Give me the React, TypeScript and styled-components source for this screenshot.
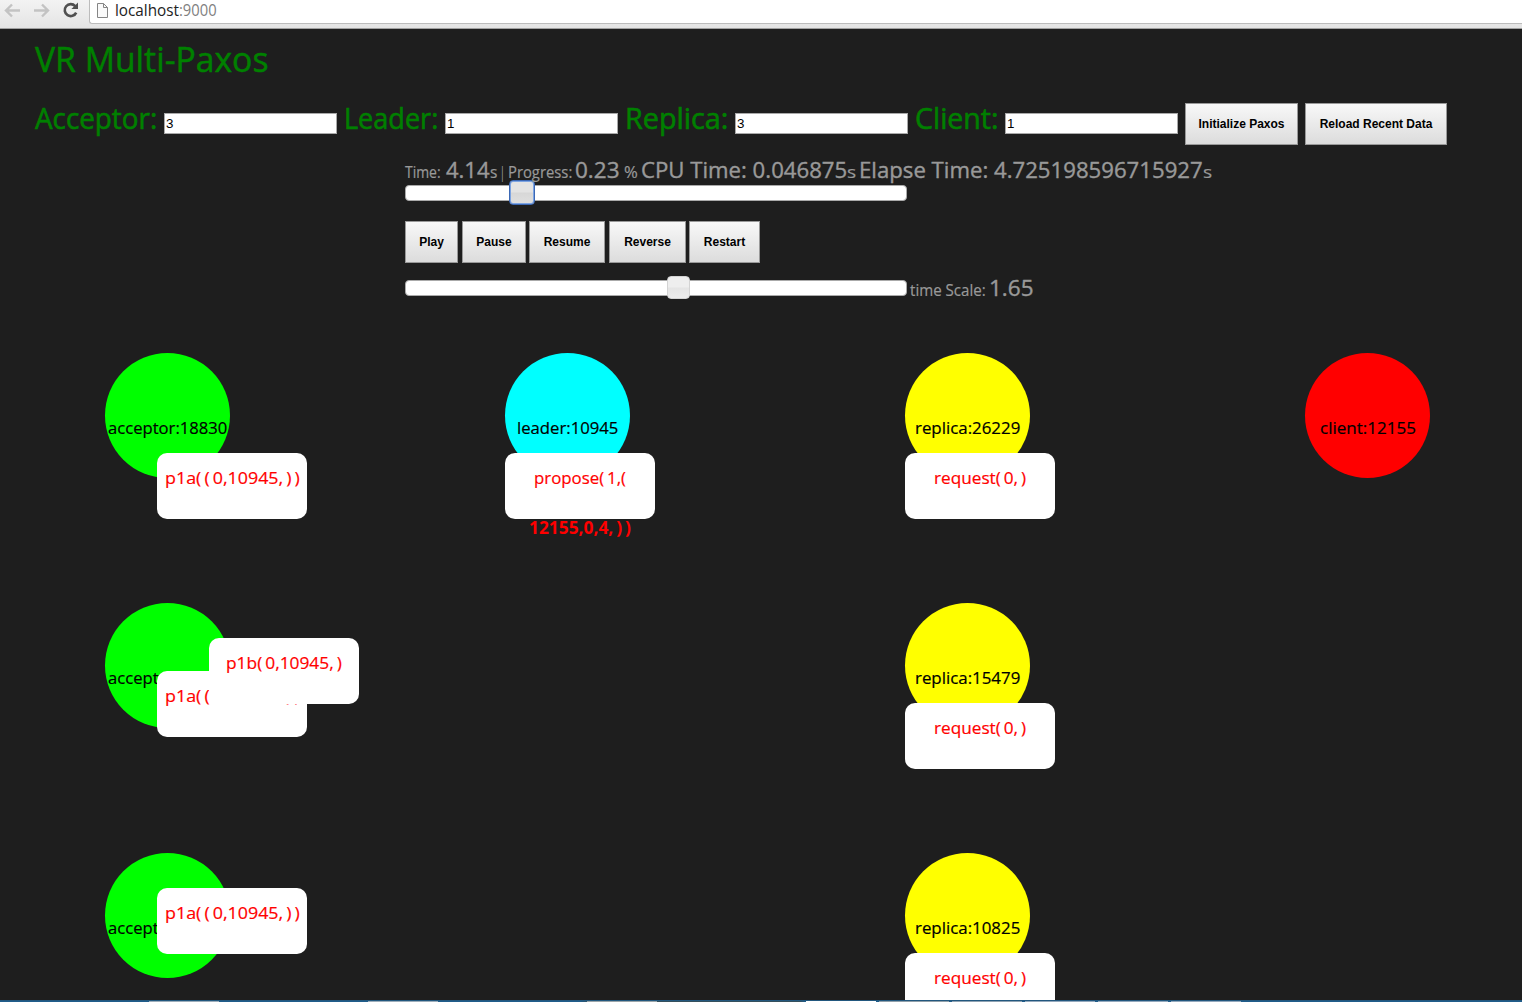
import React, { useLayoutEffect, useRef, useState } from "react";
import styled, { createGlobalStyle } from "styled-components";

const Global = createGlobalStyle`
  body { margin: 0; background: #1e1e1e; overflow: hidden; }
  * { box-sizing: border-box; }
`;

const Page = styled.div`
  display: flex;
  flex-direction: column;
  width: 1522px;
  height: 1002px;
  background: #1e1e1e;
  color: #999;
  font-family: "Open Sans", "Noto Sans", sans-serif;
`;

/* Condensed text: the glyphs are squeezed to the width that is set. */
const Slot = styled.span<{ $w: number; $gap?: number }>`
  display: inline-block;
  flex: none;
  width: ${(p) => p.$w}px;
  margin-left: ${(p) => p.$gap ?? 0}px;
  white-space: nowrap;
`;
const Squeezed = styled.span<{ $size: number; $weight: number; $stroke: number; $wordGap: number }>`
  display: inline-block;
  font-size: ${(p) => p.$size}px;
  font-weight: ${(p) => p.$weight};
  word-spacing: ${(p) => p.$wordGap}px;
  -webkit-text-stroke: ${(p) => p.$stroke}px currentColor;
  transform-origin: 0 50%;
  white-space: pre;
`;

interface TextProps {
  children: string;
  w: number;
  size: number;
  gap?: number;
  weight?: number;
  stroke?: number;
  wordGap?: number;
}

function Text({ children, w, size, gap, weight = 400, stroke = 0, wordGap = 0 }: TextProps) {
  const ref = useRef<HTMLSpanElement>(null);
  const [scale, setScale] = useState(1);
  useLayoutEffect(() => {
    if (ref.current) setScale(w / ref.current.offsetWidth);
  }, [w, children]);
  return (
    <Slot $w={w} $gap={gap}>
      <Squeezed
        ref={ref}
        $size={size}
        $weight={weight}
        $stroke={stroke}
        $wordGap={wordGap}
        style={{ transform: `scaleX(${scale})` }}
      >
        {children}
      </Squeezed>
    </Slot>
  );
}

const BrowserBar = styled.header`
  display: flex;
  flex: none;
  height: 29px;
  background: linear-gradient(#f3f3f3, #e4e4e4);
  border-bottom: 1px solid #a0a0a0;
`;
const NavIcons = styled.div`
  width: 89px;
  height: 24px;
  flex: none;
`;
const AddressBar = styled.div`
  display: flex;
  flex: 1;
  height: 24px;
  padding: 0 0 0 6px;
  background: #fff;
  border: 1px solid #bcbcbc;
  border-width: 0 0 1px 1px;
  border-bottom-left-radius: 3px;
  color: #222;
  line-height: 21px;
`;
const Host = styled.span`
  display: flex;
  margin-left: 7px;
`;
const Port = styled.span`
  display: flex;
  color: #808080;
`;

const Title = styled.h1`
  margin: 0;
  padding: 7px 0 0 35px;
  height: 74px;
  color: #008000;
  line-height: 46px;
  font-weight: 400;
`;
const Settings = styled.form`
  display: flex;
  height: 42px;
  padding-left: 35px;
`;
const Field = styled.label`
  display: flex;
  margin-right: 7px;
  color: #008000;
  line-height: 31px;
`;
const NumberInput = styled.input`
  width: 173px;
  height: 21px;
  margin: 10px 0 0 7px;
  padding: 0 1px;
  border: 1px solid #a9a9a9;
  border-radius: 0;
  background: #fff;
  color: #000;
  font: 13.33px "Liberation Sans", Arial, sans-serif;
  outline: none;
`;
const Button = styled.button<{ $w: number; $gap?: number }>`
  flex: none;
  width: ${(p) => p.$w}px;
  height: 42px;
  margin: 0 0 0 ${(p) => p.$gap ?? 0}px;
  padding: 0;
  border: 1px solid #999;
  border-radius: 0;
  background: linear-gradient(#f8f8f8, #dcdcdc);
  color: #000;
  font: bold 12px "Liberation Sans", Arial, sans-serif;
`;

const Panel = styled.section`
  display: flex;
  flex-direction: column;
  flex: none;
  height: 152px;
  padding: 8px 0 0 405px;
`;
const Stats = styled.div`
  display: flex;
  align-items: baseline;
  height: 32px;
  line-height: 34px;
`;
const SliderRow = styled.div`
  display: flex;
  height: 16px;
`;
const Track = styled.div`
  width: 502px;
  height: 16px;
  border: 1px solid #aaa;
  border-radius: 4px;
  background: #fff;
`;
const Thumb = styled.div<{ $left: number; $focused?: boolean }>`
  width: ${(p) => (p.$focused ? 26 : 23)}px;
  height: ${(p) => (p.$focused ? 25 : 23)}px;
  margin: ${(p) => (p.$focused ? -6 : -5)}px 0 0 ${(p) => p.$left}px;
  border: 1px solid ${(p) => (p.$focused ? "#3b68b5" : "#d3d3d3")};
  border-radius: 4px;
  background: ${(p) =>
    p.$focused
      ? "linear-gradient(#e3e3e3 0 48%, #d7d7d7 52%, #e0e0e0)"
      : "linear-gradient(#eeeeee 0 48%, #e4e4e4 52%, #ececec)"};
  box-shadow: ${(p) => (p.$focused ? "inset 0 0 0 1px #7da4e2" : "none")};
`;
const Controls = styled.div`
  display: flex;
  height: 42px;
  margin: 20px 0 17px;
`;
const ScaleReadout = styled.div`
  display: flex;
  align-items: baseline;
  margin: -9px 0 0 3px;
  line-height: 34px;
`;

const Canvas = styled.main`
  position: relative;
  flex: 1;
  overflow: hidden;
`;
const Circle = styled.div<{ $x: number; $y: number; $color: string }>`
  position: absolute;
  left: ${(p) => p.$x}px;
  top: ${(p) => p.$y}px;
  display: flex;
  justify-content: center;
  width: 125px;
  height: 125px;
  padding-top: 62px;
  border-radius: 50%;
  background: ${(p) => p.$color};
  color: #000;
  line-height: 26px;
`;
const Message = styled.div<{ $x: number; $y: number }>`
  position: absolute;
  left: ${(p) => p.$x}px;
  top: ${(p) => p.$y}px;
  display: flex;
  flex-direction: column;
  align-items: center;
  width: 150px;
  height: 66px;
  border-radius: 10px;
  background: #fff;
  color: #f00;
  line-height: 50px;
`;

const Taskbar = styled.footer`
  display: flex;
  flex: none;
  height: 2px;
  border-top: 1px solid #22577e;
  background: linear-gradient(90deg, #205d8b 0 580px, #35505c 590px 800px, #205d8b 805px);
`;
const Task = styled.div<{ $gap: number; $color: string }>`
  width: 70px;
  height: 1px;
  margin-left: ${(p) => p.$gap}px;
  background: ${(p) => p.$color};
`;

const fields = [
  { label: "Acceptor:", w: 122, value: 3 },
  { label: "Leader:", w: 94, value: 1 },
  { label: "Replica:", w: 103, value: 3 },
  { label: "Client:", w: 83, value: 1 },
];

const stats = [
  { t: "Time:", w: 36, gap: 0, size: 15.5 },
  { t: "4.14", w: 44, gap: 5, size: 22.5 },
  { t: "s", w: 7, gap: 0, size: 15.5 },
  { t: "|", w: 5, gap: 3, size: 15.5 },
  { t: "Progress:", w: 64, gap: 3, size: 15.5 },
  { t: "0.23", w: 45, gap: 3, size: 22.5 },
  { t: "%", w: 14, gap: 4, size: 15.5 },
  { t: "CPU Time: 0.046875", w: 206, gap: 3, size: 22.5 },
  { t: "s", w: 9, gap: 0, size: 17 },
  { t: "Elapse Time: 4.725198596715927", w: 344, gap: 3, size: 22.5 },
  { t: "s", w: 9, gap: 0, size: 17 },
];

const nodes = [
  { x: 105, y: 0, color: "#0f0", t: "acceptor:18830", w: 119 },
  { x: 105, y: 250, color: "#0f0", t: "acceptor:16312", w: 119 },
  { x: 105, y: 500, color: "#0f0", t: "acceptor:13098", w: 119 },
  { x: 505, y: 0, color: "#0ff", t: "leader:10945", w: 101 },
  { x: 905, y: 0, color: "#ff0", t: "replica:26229", w: 105 },
  { x: 905, y: 250, color: "#ff0", t: "replica:15479", w: 105 },
  { x: 905, y: 500, color: "#ff0", t: "replica:10825", w: 105 },
  { x: 1305, y: 0, color: "#f00", t: "client:12155", w: 96 },
];

const messages = [
  { x: 157, y: 100, t: "p1a( ( 0,10945, ) )", w: 135 },
  { x: 505, y: 100, t: "propose( 1,(", w: 92, second: "12155,0,4, ) )" },
  { x: 905, y: 100, t: "request( 0, )", w: 92 },
  { x: 157, y: 318, t: "p1a( ( 0,10945, ) )", w: 135 },
  { x: 209, y: 285, t: "p1b( 0,10945, )", w: 116 },
  { x: 905, y: 350, t: "request( 0, )", w: 92 },
  { x: 157, y: 535, t: "p1a( ( 0,10945, ) )", w: 135 },
  { x: 905, y: 600, t: "request( 0, )", w: 92 },
];

const CANVAS_OFFSET = 56;

const tasks: [number, string][] = [
  [149, "#9dadba"], [149, "#9dadba"], [149, "#9ba5a9"], [149, "#ffffff"],
  [3, "#91a0aa"], [3, "#8fa2b2"], [3, "#93a8bc"], [3, "#93a8bc"], [3, "#93a8bc"],
];

export default function App() {
  return (
    <Page>
      <Global />
      <BrowserBar>
        <NavIcons>
          <svg width="89" height="24" fill="none">
            <g stroke="#c3c3c3" strokeWidth="2.4">
              <path d="M20 10.5H7M12 4.5 6 10.5l6 6" />
              <path d="M34 10.5h13M42 4.5l6 6-6 6" />
            </g>
            <path d="M75.2 6.1A6 6 0 1 0 76.2 12.6" stroke="#505050" strokeWidth="2.6" />
            <path d="M78 2.6V9h-6.6z" fill="#505050" />
          </svg>
        </NavIcons>
        <AddressBar>
          <svg width="12" height="22" fill="none">
            <path d="M1.5 3.5h6l4 4v10h-10z" fill="#fafafa" stroke="#858585" />
            <path d="M7.5 3.5v4h4" stroke="#858585" />
          </svg>
          <Host>
            <Text w={64} size={15.5}>localhost</Text>
            <Port><Text w={38} size={15.5}>:9000</Text></Port>
          </Host>
        </AddressBar>
      </BrowserBar>

      <Title><Text w={233} size={35} stroke={0.5}>VR Multi-Paxos</Text></Title>

      <Settings>
        {fields.map((f) => (
          <Field key={f.label}>
            <Text w={f.w} size={28.5} stroke={0.6}>{f.label}</Text>
            <NumberInput defaultValue={f.value} />
          </Field>
        ))}
        <Button type="button" $w={113}>Initialize Paxos</Button>
        <Button type="button" $w={142} $gap={7}>Reload Recent Data</Button>
      </Settings>

      <Panel>
        <Stats>
          {stats.map((s, i) => (
            <Text key={i} w={s.w} gap={s.gap} size={s.size} stroke={s.size > 20 ? 0.4 : 0.2}>{s.t}</Text>
          ))}
        </Stats>
        <SliderRow>
          <Track><Thumb $left={103} $focused /></Track>
        </SliderRow>
        <Controls>
          <Button $w={53}>Play</Button>
          <Button $w={64} $gap={4}>Pause</Button>
          <Button $w={76} $gap={3}>Resume</Button>
          <Button $w={77} $gap={4}>Reverse</Button>
          <Button $w={71} $gap={3}>Restart</Button>
        </Controls>
        <SliderRow>
          <Track><Thumb $left={261} /></Track>
          <ScaleReadout>
            <Text w={76} size={15.5} stroke={0.2}>time Scale:</Text>
            <Text w={45} gap={3} size={22.5} stroke={0.4}>1.65</Text>
          </ScaleReadout>
        </SliderRow>
      </Panel>

      <Canvas>
        {nodes.map((n) => (
          <Circle key={n.t} $x={n.x} $y={n.y + CANVAS_OFFSET} $color={n.color}>
            <Text w={n.w} size={17.2} stroke={0.2}>{n.t}</Text>
          </Circle>
        ))}
        {messages.map((m, i) => (
          <Message key={i} $x={m.x} $y={m.y + CANVAS_OFFSET}>
            <Text w={m.w} size={17.2} wordGap={-1.5} stroke={0.2}>{m.t}</Text>
            {m.second && <Text w={102} size={17} weight={700} wordGap={-1.5}>{m.second}</Text>}
          </Message>
        ))}
      </Canvas>

      <Taskbar>
        {tasks.map(([gap, color], i) => (
          <Task key={i} $gap={gap} $color={color} />
        ))}
      </Taskbar>
    </Page>
  );
}
